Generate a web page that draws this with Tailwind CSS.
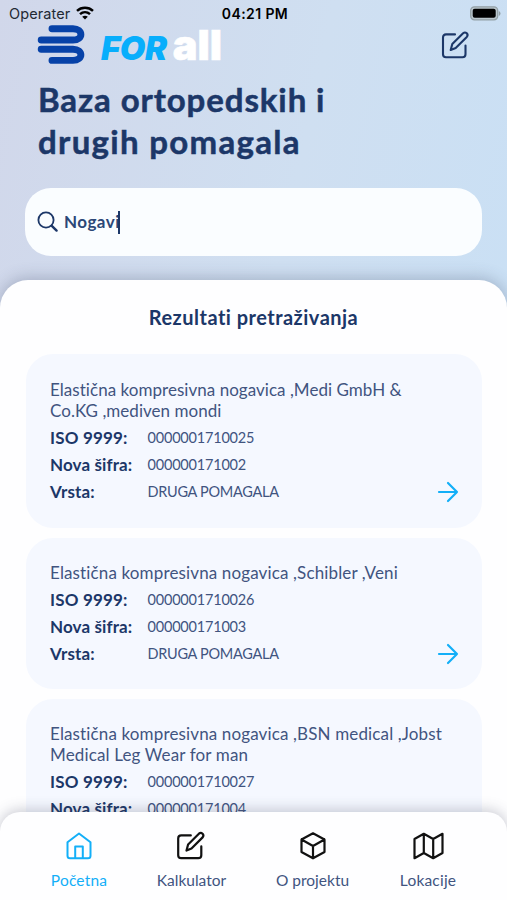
<!DOCTYPE html>
<html lang="hr">
<head>
<meta charset="utf-8">
<title>FORall</title>
<script src="https://cdn.jsdelivr.net/npm/@tailwindcss/browser@4"></script>
</head>
<body class="w-[507px] h-[900px] overflow-hidden font-['Lato',sans-serif] text-[#1c3768] [font-variant-ligatures:none]">
<div class="relative flex flex-col w-[507px] h-[900px] overflow-hidden bg-linear-[102deg,#d1d7ea_0%,#cfdff1_48%,#c7e0f6_100%]">

  <header class="h-[280px] shrink-0">
    <div class="grid grid-cols-3 items-center h-[27px] pl-[9px] pr-[6px] font-['Inter',sans-serif] text-black">
      <div class="flex items-center gap-[6px] text-[14.5px] text-[#222933]"><span class="tracking-[0.1px]">Operater</span>
        <svg class="w-[18px] h-[14px] -mt-[2px]" viewBox="0 0 18 14" fill="none" stroke="#000" stroke-width="2.5"><path d="M1 4.8C5.5.7 12.5.7 17 4.8M4 8.1c2.9-2.6 7.1-2.6 10 0"/><path d="M9 13.5 6.2 10.8c1.5-1.5 4.1-1.5 5.6 0z" fill="#000" stroke="none"/></svg>
      </div>
      <div class="text-center text-[14px] font-semibold tracking-[0.4px] whitespace-nowrap">04:21 PM</div>
      <svg class="justify-self-end w-[31px] h-[15px]" viewBox="0 0 31 15"><rect x=".7" y=".8" width="27" height="13" rx="3.7" fill="#bac6cd" stroke="#929fa5" stroke-width="1.3"/><rect x="2.7" y="2.8" width="23" height="9" rx="2" fill="#000"/><path d="M28.8 5v5q1.7-.7 1.7-2.5T28.8 5z" fill="#929fa5"/></svg>
    </div>
    <div class="flex items-start justify-between h-[51px] pl-[37px] pr-[37px]">
      <div class="flex items-start">
        <svg class="w-[49px] h-[40px] -mt-[2px]" viewBox="0 0 49 40" fill="none" stroke="#0742a8" stroke-width="6.9" stroke-linecap="round"><path d="M15 3.8H36C46.500 3.800 46.500 15 36 15H4.200M4.200 24.200H36C46.500 24.200 46.500 35.400 36 35.400H15"/></svg>
        <div class="flex items-baseline -mt-[2px] ml-[15px] leading-[40px] whitespace-nowrap font-['Inter',sans-serif]">
          <span class="text-[33px] font-black italic text-[#08aefc] tracking-[-0.4px]">FOR</span><span class="ml-[6px] text-[41.5px] font-black text-white tracking-[0px] [-webkit-text-stroke:0.6px_white]">all</span>
        </div>
      </div>
      <svg class="w-[30px] h-[30px] mt-[3px]" viewBox="0 0 30 30" fill="none" stroke="#1c3768" stroke-width="2.1" stroke-linecap="round" stroke-linejoin="round"><path d="M15 4.400H6Q3 4.400 3 7.400V24.300Q3 27.300 6 27.300H22.500Q25.500 27.300 25.500 24.300V15.600"/><path d="m10.700 20 1.600-6L23.100 3.200q1.900-1.500 3.700.1 1.600 1.800 0 3.600L15.700 18z"/></svg>
    </div>
    <h1 class="pl-[38px] text-[33px] leading-[42px] font-bold tracking-[1.05px] [-webkit-text-stroke:0.5px_#1c3768]"><span class="tracking-[0.9px]">Baza ortopedskih i</span><br><span class="tracking-[1.3px]">drugih pomagala</span></h1>
    <div class="flex items-center w-[457px] h-[68px] mt-[26px] ml-[25px] pl-[12px] rounded-[26px] bg-[#fafdff]">
      <svg class="w-[22px] h-[22px]" viewBox="0 0 22 22" fill="none" stroke="#1c3768" stroke-width="1.8" stroke-linecap="round"><circle cx="9" cy="9" r="7.6"/><path d="m14.8 14.8 4.800 4.800" stroke-width="2.4"/></svg>
      <span class="ml-[5px] text-[17px] font-bold text-[#2b4777] tracking-[0.45px]">Nogavi</span><span class="w-[2px] h-[23px] -ml-[2px] bg-[#1c3768]"></span>
    </div>
  </header>

  <main class="h-[620px] shrink-0 rounded-t-[28px] bg-[#fefeff] shadow-[0_-2px_16px_rgba(60,70,100,0.3)] px-[25.5px]">
    <h2 class="h-[74px] pt-[23px] text-center text-[20px] leading-[28px] font-bold tracking-[0.48px]">Rezultati pretraživanja</h2>
    <div class="flex flex-col gap-[10px]">
      <article class="relative h-[173.5px] rounded-[27px] bg-[#f5f8ff] px-[24.5px] pt-[24.5px]">
        <p class="text-[17px] leading-[21.3px] whitespace-nowrap text-[#41547f] tracking-[0.04px]">Elastična kompresivna nogavica ,Medi GmbH &amp;<br>Co.KG ,mediven mondi</p>
        <dl class="grid grid-cols-[97.5px_1fr] mt-[2.5px] leading-[27.3px] text-[14.5px] tracking-[-0.2px] text-[#41547f]">
          <dt class="font-bold text-[17px] tracking-[0.18px] text-[#1c3768]">ISO 9999:</dt><dd>0000001710025</dd>
          <dt class="font-bold text-[17px] tracking-[0.12px] text-[#1c3768]">Nova šifra:</dt><dd>000000171002</dd>
          <dt class="font-bold text-[17px] tracking-[0.12px] text-[#1c3768]">Vrsta:</dt><dd class="tracking-[-0.28px]">DRUGA POMAGALA</dd>
        </dl>
        <svg class="absolute right-[23px] bottom-[25px] w-[22px] h-[22px]" viewBox="0 0 22 22" fill="none" stroke="#13aff8" stroke-width="2.2" stroke-linecap="round" stroke-linejoin="round"><path d="M2 11h18M11 2l9 9-9 9"/></svg>
      </article>
      <article class="relative h-[151.5px] rounded-[27px] bg-[#f5f8ff] px-[24.5px] pt-[24px]">
        <p class="text-[17px] leading-[21.3px] whitespace-nowrap text-[#41547f] tracking-[0.14px]">Elastična kompresivna nogavica ,Schibler ,Veni</p>
        <dl class="grid grid-cols-[97.5px_1fr] mt-[3px] leading-[27.3px] text-[14.5px] tracking-[-0.2px] text-[#41547f]">
          <dt class="font-bold text-[17px] tracking-[0.18px] text-[#1c3768]">ISO 9999:</dt><dd>0000001710026</dd>
          <dt class="font-bold text-[17px] tracking-[0.12px] text-[#1c3768]">Nova šifra:</dt><dd>000000171003</dd>
          <dt class="font-bold text-[17px] tracking-[0.12px] text-[#1c3768]">Vrsta:</dt><dd class="tracking-[-0.28px]">DRUGA POMAGALA</dd>
        </dl>
        <svg class="absolute right-[23px] bottom-[24px] w-[22px] h-[22px]" viewBox="0 0 22 22" fill="none" stroke="#13aff8" stroke-width="2.2" stroke-linecap="round" stroke-linejoin="round"><path d="M2 11h18M11 2l9 9-9 9"/></svg>
      </article>
      <article class="h-[173.5px] rounded-[27px] bg-[#f5f8ff] px-[24.5px] pt-[24px]">
        <p class="text-[17px] leading-[21.3px] whitespace-nowrap text-[#41547f] tracking-[0.14px]">Elastična kompresivna nogavica ,BSN medical ,Jobst<br>Medical Leg Wear for man</p>
        <dl class="grid grid-cols-[97.5px_1fr] mt-[2px] leading-[27.3px] text-[14.5px] tracking-[-0.2px] text-[#41547f]">
          <dt class="font-bold text-[17px] tracking-[0.18px] text-[#1c3768]">ISO 9999:</dt><dd>0000001710027</dd>
          <dt class="font-bold text-[17px] tracking-[0.12px] text-[#1c3768]">Nova šifra:</dt><dd>000000171004</dd>
        </dl>
      </article>
    </div>
  </main>

  <nav class="absolute inset-x-0 bottom-0 h-[88px] rounded-t-[20px] bg-[#fefeff] shadow-[0_-2px_14px_rgba(60,65,90,0.28)] grid grid-cols-[135px_90px_152px_79px] pl-[11.5px] pt-[18px] text-[15.5px] leading-[22px] text-[#41547f]">
    <div class="flex flex-col items-center gap-[7px] text-[#13aff8]">
      <svg class="w-[32px] h-[32px]" viewBox="0 0 32 32" fill="none" stroke="currentColor" stroke-width="2" stroke-linecap="round" stroke-linejoin="round"><path d="M4.500 12.200V25.700Q4.500 28.200 7 28.200H25Q27.500 28.200 27.500 25.700V12.200L16 3.500z"/><path d="M12.200 28V16.500H19.800V28"/></svg>
      <span class="tracking-[0.2px]">Početna</span>
    </div>
    <div class="flex flex-col items-center gap-[7px]">
      <svg class="w-[32px] h-[32px]" viewBox="0 0 32 32" fill="none" stroke="#111" stroke-width="2.200" stroke-linecap="round" stroke-linejoin="round"><path d="M14.800 5.400H5.200Q2.200 5.400 2.200 8.400V25.200Q2.200 28.200 5.200 28.200H22.300Q25.300 28.200 25.300 25.200V16.400"/><path d="m10.500 20.500 1.600-6L22.900 3.700q1.900-1.500 3.700.1 1.600 1.800 0 3.600L15.500 18.500z"/></svg>
      <span>Kalkulator</span>
    </div>
    <div class="flex flex-col items-center gap-[7px]">
      <svg class="w-[32px] h-[32px]" viewBox="0 0 32 32" fill="none" stroke="#111" stroke-width="2.200" stroke-linecap="round" stroke-linejoin="round"><path d="M16 3.300 27.500 9.500V22L16 28.300 4.500 22V9.500zM4.500 9.500 16 16l11.500-6.500M16 16v12"/></svg>
      <span>O projektu</span>
    </div>
    <div class="flex flex-col items-center gap-[7px]">
      <svg class="w-[32px] h-[32px]" viewBox="-.5 0 32 32" fill="none" stroke="#111" stroke-width="2.200" stroke-linecap="round" stroke-linejoin="round"><path d="M2 9 11.300 3.800 20.700 9 30 3.800V23L20.700 28.200 11.300 23 2 28.200zM11.300 3.800V23M20.700 9V28.200"/></svg>
      <span class="tracking-[0.2px]">Lokacije</span>
    </div>
  </nav>
</div>
</body>
</html>
